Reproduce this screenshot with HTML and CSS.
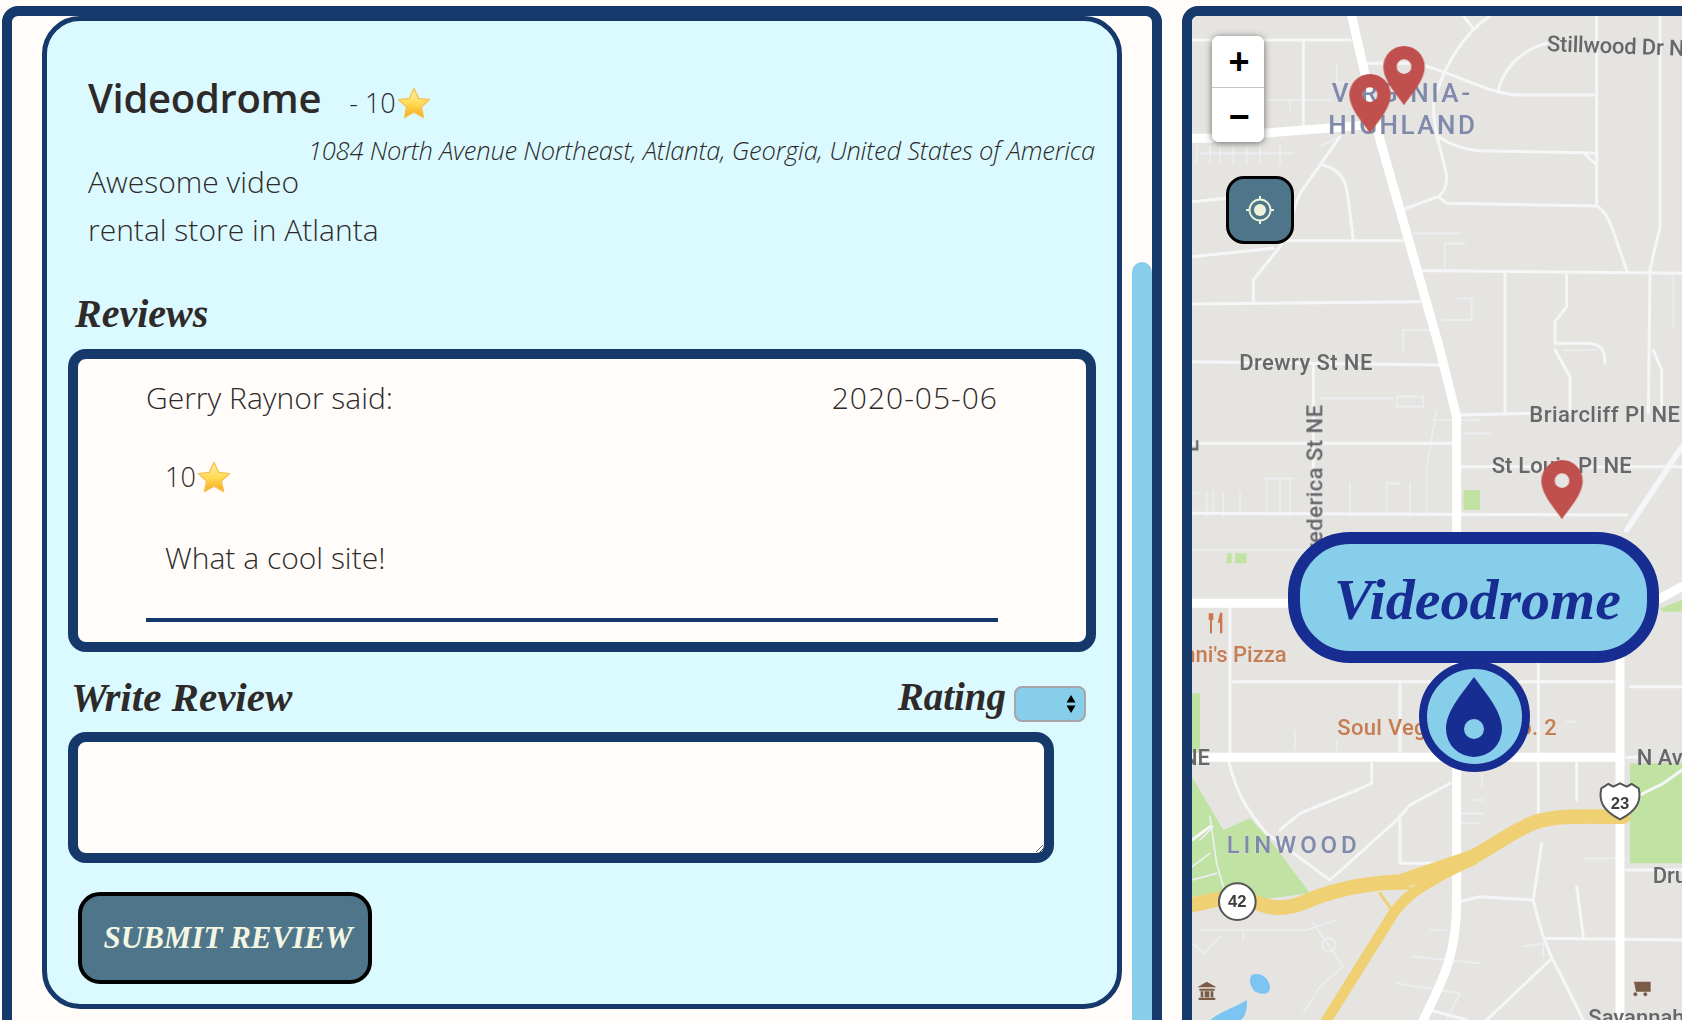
FILE: index.html
```html
<!DOCTYPE html>
<html lang="en">
<head>
<meta charset="utf-8">
<title>Videodrome</title>
<link rel="stylesheet" href="styles.css">
</head>
<body>
<svg class="defs" width="0" height="0" aria-hidden="true">
  <defs>
    <linearGradient id="starfill" x1="0" y1="0" x2="0" y2="1">
      <stop offset="0" stop-color="#fff6b0"/>
      <stop offset="0.55" stop-color="#ffd84d"/>
      <stop offset="1" stop-color="#f8a61c"/>
    </linearGradient>
    <symbol id="star" viewBox="0 0 34 32">
      <path d="M17 1.5 21.6 11.4 32.6 12.6 24.4 20 26.6 30.6 17 25.2 7.4 30.6 9.6 20 1.4 12.6 12.4 11.4Z" fill="url(#starfill)" stroke="#f6c255" stroke-width="1.4" stroke-linejoin="round"/>
    </symbol>
    <symbol id="pin" viewBox="0 0 124 178" overflow="visible">
      <path fill-rule="evenodd" d="M62 178C50 156 0 108 0 62A62 62 0 0 1 124 62C124 108 74 156 62 178ZM62 40A22 22 0 1 0 62 84A22 22 0 1 0 62 40Z"/>
    </symbol>
  </defs>
</svg>
<main class="layout">
  <section class="panel panel-left">
    <article class="card">
      <header class="title-row">
        <h1 class="title">Videodrome</h1>
        <span class="score">- 10<svg class="star star-lg"><use href="#star"/></svg></span>
      </header>
      <p class="address">1084 North Avenue Northeast, Atlanta, Georgia, United States of America</p>
      <p class="description">Awesome video<br>rental store in Atlanta</p>
      <h2 class="script-heading reviews-heading">Reviews</h2>
      <div class="reviews">
        <div class="review-head"><span>Gerry Raynor said:</span><span class="review-date">2020-05-06</span></div>
        <div class="review-score">10<svg class="star star-lg"><use href="#star"/></svg></div>
        <p class="review-text">What a cool site!</p>
        <div class="review-rule"></div>
      </div>
      <div class="write-row">
        <h2 class="script-heading">Write Review</h2>
        <label class="rating">
          <span class="script-heading rating-label">Rating</span>
          <span class="select-wrap">
            <select class="rating-select" aria-label="Rating"><option></option></select>
            <svg class="select-arrows" width="10" height="20" viewBox="0 0 10 20"><path d="M5 1 9.5 8.5H.5ZM5 19 .5 11.5H9.5Z"/></svg>
          </span>
        </label>
      </div>
      <textarea class="review-input"></textarea>
      <button class="submit" type="button">SUBMIT REVIEW</button>
    </article>
    <div class="scrollbar"></div>
  </section>

  <section class="panel panel-map">
    <div class="map">
      <svg class="map-art" width="490" height="1004" viewBox="36 48 1470 3012">
        <g class="tiles">
          <path class="green" d="M36 2330 130 2490 210 2455 270 2520 390 2680 230 2700 115 2685 36 2690ZM36 2080H60V2260H36ZM1350 2290H1506V2590H1350ZM850 1470H900V1530H850ZM140 1660H155V1690H140ZM165 1660H200V1690H165ZM1440 1825 1506 1800V1835H1450Z"/>

          <g class="road-pale">
            <path d="M36 1650H390V1700M40 1480H60M80 1480V1550M100 1480V1550M130 1480V1550M180 1480V1550M260 1440V1550M300 1440V1550M330 1440V1550M510 1450V1550M620 1450V1550M690 1450V1550M740 1400V1550M250 1435H340M620 1450H660M740 1400 770 1230V1240M650 1190H730V1220H650ZM420 1195H640M850 1300H930M760 1260H900"/>
            <path d="M50 440V490M90 440V490M120 440V490M160 440V490M200 440V490M240 440V490M300 440V490M60 460H340M330 300V330M260 300H450M470 190V250H500M420 440 480 410M670 1050V990H760M700 700H840M795 730H855M795 730V800M830 895H875V960H790M1150 1050H1250M1480 830V980"/>
            <path d="M60 2520 100 2480M36 2600 90 2560M36 2640 110 2620M90 2450 110 2590 130 2660M400 2770 490 2900 420 2960 370 3040M60 2790 120 2790H380L470 2760M40 2830 70 2860 120 2810M460 2820A20 20 0 1 0 461 2821M190 2820V2790M700 2870 900 2890M750 2790H800M650 2950 840 2980 800 3060M880 2400H910M840 2440H910M840 2470H900M905 2320V2360M345 2190V2250M470 2220V2250M1160 2165H1190M1210 2575H1300M1030 2840 1090 2830 1090 2870"/>
          </g>

          <g class="road">
            <path d="M36 120H510M370 120V385M36 605 140 595M340 580 140 595M36 770 280 745M280 722H670M480 410 360 580 300 740 220 840V910M430 495C480 510 500 540 505 600L520 720M36 912 720 905M720 812 1506 820M975 812V1240M1160 820V920L1125 965V1030H1220C1270 1030 1275 1060 1275 1090"/>
            <path d="M555 190H700C800 205 900 275 1010 285H1250M1250 48V610M1440 48V680L1410 810 1405 1240M850 48 880 85M930 48C850 100 790 200 760 310 760 400 790 470 800 530 800 560 790 580 775 590L665 630M775 590 800 610 1250 618C1290 640 1300 700 1340 810M775 410C820 440 860 450 900 452L1210 458 1250 460M1210 458 1250 495M1100 130C1020 150 970 210 955 270"/>
            <path d="M1125 1050 1170 1130V1240M1420 1050 1445 1110V1240M36 1085 800 1095M400 1090V1600M36 1330H820M840 1245 1060 1240M845 1400H1506M36 1540 1340 1545M160 2045H1300M1350 2060H1506"/>
            <path d="M150 1810V2270M660 2045V2270M1075 1990V2440M1190 2290V2400M145 2280C170 2380 200 2430 260 2500L450 2640M575 2290V2350L520 2375 360 2440 300 2490M810 2350 690 2415 650 2460 450 2640M660 2460V2590H800M840 2705 900 2690 1060 2700 1085 2530M1060 2700C1080 2790 1110 2870 1140 2920L1210 3060M1090 2815 1506 2820M1110 2880 920 3060M1190 2660 1210 2810M36 2520 90 2480M750 3030 860 3060M1340 2610H1506M1380 2385 1450 2350 1506 2310"/>
            <path class="road-mid" d="M1340 1590 1506 1340"/>
          </g>

          <g class="road-major">
            <path d="M515 48 600 420 680 700 780 1050 830 1250V2700C830 2850 800 2920 730 3060"/>
            <path d="M36 415 95 415M250 400 560 375"/>
            <path d="M36 1810H330M1430 1800 1506 1760M36 2272H1310"/>
            <path d="M1320 1940V3060"/>
          </g>
          <path class="road" d="M1340 2272H1380"/>

          <g class="highway">
            <path d="M36 2715 115 2697 230 2708C270 2725 320 2735 400 2695 480 2665 560 2650 660 2645L880 2570C940 2540 1000 2490 1070 2465 1140 2445 1200 2450 1330 2450"/>
            <path class="highway-branch" d="M440 3060 640 2740C670 2700 700 2660 880 2580"/>
            <path class="highway-thin" d="M600 2680 635 2730M610 2665H700"/>
          </g>

          <path class="water" d="M215 2925C240 2915 265 2930 270 2960 270 2985 250 2985 225 2975 210 2960 205 2940 215 2925ZM90 3060C130 3030 170 3020 200 3000 205 3030 190 3060 180 3060Z"/>
          <g class="poi-icon">
            <path d="M80 2945 110 2962H52ZM58 2966H104V2972H58ZM56 2993H106V3000H56ZM62 2974H70V2992H62ZM92 2974H100V2992H92ZM74 2974H88V2992H74Z"/>
            <path d="M1362 2945H1412V2975H1368ZM1372 2982A6 6 0 1 0 1372 2983ZM1402 2982A6 6 0 1 0 1402 2983Z"/>
            <path class="poi-orange" d="M86 1840H100V1860H96V1900H90V1860H86ZM120 1838H127V1900H120V1868H113Z"/>
          </g>

          <text class="lbl" x="1100" y="153" textLength="450" transform="rotate(2 1100 153)">Stillwood Dr NE</text>
          <text class="lbl-hood" x="455" y="305" textLength="415">VIRGINIA-</text>
          <text class="lbl-hood" x="445" y="402" textLength="440">HIGHLAND</text>
          <text class="lbl" x="178" y="1110" textLength="399">Drewry St NE</text>
          <text class="lbl" x="1048" y="1266" textLength="452">Briarcliff Pl NE</text>
          <text class="lbl" x="935" y="1420" textLength="420">St Louis Pl NE</text>
          <text class="lbl" x="428" y="1690" textLength="475" transform="rotate(-90 428 1690)">Frederica St NE</text>
          <text class="lbl" x="55" y="1356" transform="rotate(-90 55 1356)">E</text>
          <text class="lbl lbl-end" x="90" y="2295">NE</text>
          <text class="lbl" x="1370" y="2295">N Ave</text>
          <text class="lbl" x="1418" y="2648">Drum</text>
          <text class="lbl" x="1225" y="3076">Savannah</text>
          <text class="lbl-poi lbl-end" x="320" y="1985">Antonni's Pizza</text>
          <text class="lbl-poi" x="472" y="2205" textLength="658">Soul Vegetarian No. 2</text>
          <text class="lbl-hood lbl-small" x="140" y="2558" textLength="390">LINWOOD</text>

          <circle class="shield" cx="172" cy="2705" r="55"/>
          <text class="shield-text" x="172" y="2722">42</text>
          <path class="shield" d="M1264 2365 1285 2352 1300 2360 1320 2350 1340 2360 1355 2352 1376 2365C1384 2400 1375 2430 1320 2458 1265 2430 1256 2400 1264 2365Z"/>
          <text class="shield-text" x="1320" y="2426">23</text>
        </g>
        <use class="pin" href="#pin" x="610" y="138" width="124" height="178"/>
        <use class="pin" href="#pin" x="508" y="222" width="124" height="178"/>
        <use class="pin" href="#pin" x="1084" y="1380" width="124" height="178"/>
      </svg>

      <div class="zoom">
        <button class="zoom-btn" type="button">+</button>
        <button class="zoom-btn" type="button">−</button>
      </div>

      <button class="locate" type="button" aria-label="Locate">
        <svg width="34" height="34" viewBox="0 0 34 34">
          <circle class="loc-ring" cx="17" cy="17" r="10.5"/>
          <circle class="loc-dot" cx="17" cy="17" r="6"/>
          <path class="loc-tick" d="M17 3V7M17 27V31M3 17H7M27 17H31"/>
        </svg>
      </button>

      <div class="marker">
        <div class="marker-label">Videodrome</div>
        <div class="marker-badge">
          <svg width="60" height="82" viewBox="0 0 60 82">
            <path class="drop" fill-rule="evenodd" d="M30 1C44 20 58 36 58 53A28 28 0 0 1 2 53C2 36 16 20 30 1ZM30 43A10 10 0 1 0 30 63A10 10 0 1 0 30 43Z"/>
          </svg>
        </div>
      </div>
    </div>
  </section>
</main>
</body>
</html>
```

FILE: styles.css
```css
* { box-sizing: border-box; }

html, body {
  margin: 0;
  height: 1020px;
  overflow: hidden;
  background: #fffcf9;
}

body {
  font-family: "Open Sans", "Noto Sans", sans-serif;
  font-weight: 350;
  color: #2f2a2a;
}

.defs { position: absolute; }

.layout {
  display: flex;
  gap: 20px;
  padding: 6px 0 0 2px;
  width: 1720px;
}

.panel {
  height: 1100px;
  border: 10px solid #15396a;
  border-radius: 16px;
  overflow: hidden;
  flex: none;
}

.panel-left {
  width: 1160px;
  display: flex;
  align-items: flex-start;
  padding-left: 30px;
}

.panel-map { width: 520px; }

.card {
  width: 1080px;
  height: 993px;
  flex: none;
  background: #dbfaff;
  border: 5px solid #15396a;
  border-radius: 38px;
  padding-left: 21px;
  padding-right: 22px;
}

.scrollbar {
  width: 20px;
  height: 900px;
  margin: 246px 0 0 10px;
  background: #87ceeb;
  border-radius: 10px 10px 0 0;
  flex: none;
}

.title-row {
  display: flex;
  align-items: baseline;
  padding: 51px 0 0 20px;
  height: 108px;
}

.title {
  margin: 0;
  font-size: 40px;
  font-weight: 600;
  line-height: 52px;
  letter-spacing: -0.3px;
}

.score {
  margin-left: 28px;
  font-size: 27px;
  display: inline-flex;
  align-items: center;
  line-height: 40px;
}

.star { display: block; }
.star-lg { width: 34px; height: 32px; margin-left: 1px; }

.address {
  margin: 5px 0 0;
  font-size: 25.5px;
  font-style: italic;
  line-height: 32px;
  text-align: right;
  letter-spacing: -0.2px;
  white-space: nowrap;
}

.description {
  margin: -8px 0 0 20px;
  font-size: 30px;
  line-height: 48px;
  white-space: nowrap;
}

.script-heading {
  margin: 0;
  font-family: "Liberation Serif", serif;
  font-style: italic;
  font-weight: 700;
  font-size: 41px;
  line-height: 56px;
}

.rating-label { font-size: 39px; }

.reviews-heading {
  margin: 32px 0 7px 7px;
  font-size: 40px;
  height: 56px;
}

.reviews {
  width: 1028px;
  height: 303px;
  background: #fffcf9;
  border: 10px solid #15396a;
  border-radius: 18px;
  padding: 15px 88px 0 68px;
}

.review-head {
  display: flex;
  justify-content: space-between;
  font-size: 30px;
  line-height: 48px;
}

.review-date { letter-spacing: 1px; }

.review-score {
  display: flex;
  align-items: center;
  margin: 31px 0 0 19px;
  font-size: 27px;
  line-height: 48px;
}

.review-text {
  margin: 33px 0 0 19px;
  font-size: 30px;
  line-height: 48px;
}

.review-rule {
  height: 4px;
  margin-top: 36px;
  background: #15396a;
}

.write-row {
  display: flex;
  justify-content: space-between;
  align-items: flex-start;
  height: 80px;
  padding: 17px 9px 0 3px;
}

.rating {
  display: flex;
  gap: 8px;
  align-items: flex-start;
}

.select-wrap {
  position: relative;
  display: block;
  margin-top: 17px;
}

.rating-select {
  display: block;
  appearance: none;
  width: 72px;
  height: 36px;
  background: #87ceeb;
  border: 2px solid #a6a6a6;
  border-radius: 8px;
}

.select-arrows {
  position: absolute;
  top: 8px;
  right: 10px;
  pointer-events: none;
}

.review-input {
  display: block;
  width: 986px;
  height: 131px;
  background: #fffcf9;
  border: 10px solid #15396a;
  border-radius: 18px;
  outline: none;
}

.submit {
  display: block;
  width: 294px;
  height: 92px;
  margin: 29px 0 0 10px;
  background: #4e758a;
  border: 4px solid #000;
  border-radius: 22px;
  color: #f2f6e2;
  font-family: "Liberation Serif", serif;
  font-style: italic;
  font-weight: 700;
  font-size: 31px;
  white-space: nowrap;
  padding: 0 0 0 6px;
}

/* Map */
.map {
  position: relative;
  width: 490px;
  height: 1004px;
  background: #e6e4e1;
  overflow: hidden;
}

.map-art { display: block; }

.tiles { filter: blur(0.35px); }

.green { fill: #c0e3a4; }
.water { fill: #7cc4f2; }

.road, .road-pale, .road-major, .highway {
  fill: none;
  stroke-linecap: round;
  stroke-linejoin: round;
}

.road { stroke: #f6f6f8; stroke-width: 9; }
.road-mid { stroke-width: 17; }
.road-pale { stroke: #eeeef2; stroke-width: 5; }
.road-major { stroke: #fff; stroke-width: 27; }

.highway { stroke: #efd072; stroke-width: 44; }
.highway-branch { stroke-width: 32; }
.highway-thin { stroke-width: 9; }

.poi-icon { fill: #7a5c47; }
.poi-orange { fill: #c9784b; }

.lbl, .lbl-hood, .lbl-poi {
  font-family: Roboto, "Liberation Sans", sans-serif;
  font-size: 66px;
  font-weight: 500;
  paint-order: stroke;
  stroke: #e6e4e1;
  stroke-width: 2px;
}

.lbl { fill: #66676a; }
.lbl-hood { fill: #7f89ab; font-size: 78px; }
.lbl-small { font-size: 72px; }
.lbl-poi { fill: #c67d52; }
.lbl-end { text-anchor: end; }

.shield {
  fill: #fff;
  stroke: #555;
  stroke-width: 6;
}

.shield-text {
  font-family: "Liberation Sans", sans-serif;
  font-size: 50px;
  font-weight: 700;
  fill: #3e3e3e;
  text-anchor: middle;
}

.pin { fill: #c0504d; }

.zoom {
  position: absolute;
  left: 20px;
  top: 20px;
  width: 52px;
  height: 106px;
  display: flex;
  flex-direction: column;
  border-radius: 7px;
  background: #fff;
  box-shadow: 0 1px 7px rgba(0, 0, 0, 0.55);
  overflow: hidden;
}

.zoom-btn {
  flex: 1;
  padding: 0 0 0 2px;
  background: #fff;
  border: 0;
  font-family: "Liberation Sans", sans-serif;
  font-weight: 700;
  font-size: 36px;
  line-height: 1;
  color: #000;
}

.zoom-btn + .zoom-btn { border-top: 1px solid #c4c4c4; padding-top: 3px; }

.locate {
  position: absolute;
  left: 34px;
  top: 160px;
  width: 68px;
  height: 68px;
  padding: 0;
  background: #4e758a;
  border: 3px solid #000;
  border-radius: 18px;
  display: flex;
  align-items: center;
  justify-content: center;
}

.loc-ring { fill: none; stroke: #edf3da; stroke-width: 1.8; }
.loc-dot { fill: #edf3da; }
.loc-tick { stroke: #edf3da; stroke-width: 2; }

.marker {
  position: absolute;
  left: 96px;
  top: 516px;
  width: 371px;
  display: flex;
  flex-direction: column;
  align-items: center;
}

.marker-label {
  width: 371px;
  height: 131px;
  background: #87ceeb;
  border: 12px solid #172d91;
  border-radius: 62px;
  color: #172d91;
  font-family: "Liberation Serif", serif;
  font-style: italic;
  font-weight: 700;
  font-size: 58px;
  line-height: 112px;
  text-align: center;
  padding-left: 8px;
}

.marker-badge {
  width: 111px;
  height: 111px;
  margin-top: -2px;
  margin-left: 1px;
  background: #87ceeb;
  border: 8px solid #172d91;
  border-radius: 50%;
  display: flex;
  align-items: flex-start;
  justify-content: center;
  padding-top: 7px;
}

.drop { fill: #172d91; }
```
